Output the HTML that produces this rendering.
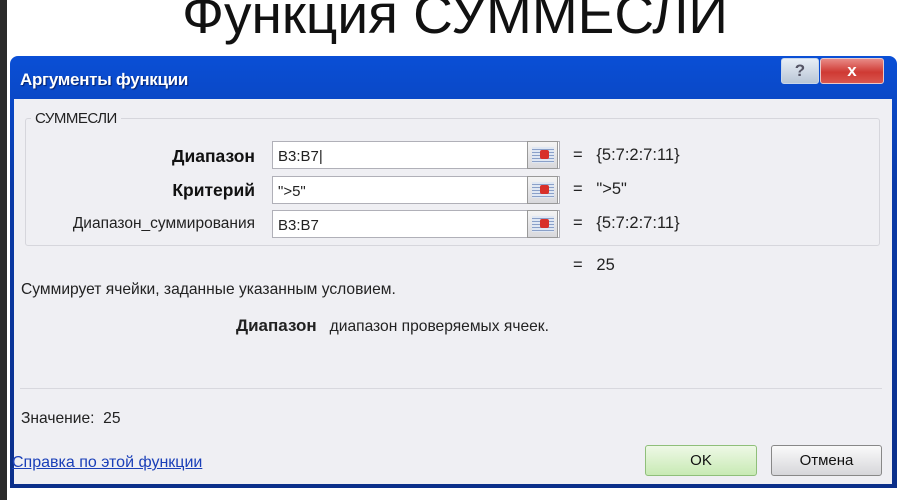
<!DOCTYPE html>
<html><head><meta charset="utf-8"><style>
*{margin:0;padding:0;box-sizing:border-box}
body{width:900px;height:500px;background:#fff;position:relative;overflow:hidden;font-family:"Liberation Sans","DejaVu Sans",sans-serif;color:#111}
.a{position:absolute;white-space:nowrap}
.strip{left:0;top:0;width:7px;height:500px;background:#2a2a2a}
.title{left:0;width:910px;top:-18px;text-align:center;font-size:55px;color:#111}
.dlg{left:10px;top:56px;width:887px;height:432px;background:linear-gradient(#0a4fd6,#0a3aa8 30%,#0b2f8a);border-radius:8px 8px 0 0}
.tb{left:20px;top:70px;color:#fff;font-weight:bold;font-size:17px;text-shadow:1px 1px 1px #03206b;letter-spacing:-0.3px}
.body{left:14px;top:99px;width:878px;height:385px;background:#efeff3}
.grp{left:25px;top:118px;width:855px;height:128px;border:1px solid #d6d6dc;border-radius:3px}
.gl{left:31px;top:110px;background:#efeff3;padding:0 4px;font-size:15px;color:#222;letter-spacing:-0.5px}
.lbl{font-size:15.5px;text-align:right;width:240px;left:15px;color:#222}
.b{font-weight:bold;font-size:17.5px;color:#111}
.inp{left:272px;width:288px;height:28px;border:1px solid #b0b0b8;background:#fff;font-size:15px;padding:6px 5px;color:#222}
.ib{left:527px;width:31px;height:28px;border:1px solid #999;background:linear-gradient(#f4f4f4,#d8d8dc)}
.ib i{position:absolute;left:4px;top:5px;width:22px;height:16px;background:repeating-linear-gradient(#dfe7f3 0 2px,#8aa0c8 2px 3px)}
.ib b{position:absolute;left:12px;top:8px;width:9px;height:9px;background:#d8302a;border-radius:2px}
.eq{left:573px;font-size:16.5px;color:#222}
.txt{font-size:15.6px;color:#222}
.btn{top:445px;height:31px;border:1px solid #888;border-radius:3px;font-size:15px;text-align:center;line-height:29px;color:#111}
</style></head><body>
<div class="a strip"></div>
<div class="a title">Функция СУММЕСЛИ</div>
<div class="a dlg"></div>
<div class="a tb">Аргументы функции</div>
<div class="a" style="left:781px;top:58px;width:38px;height:26px;border:1px solid #c9d6ea;border-radius:3px;background:linear-gradient(#e8eef6,#b9c6d6);color:#556;text-align:center;font-weight:bold;font-size:17px;line-height:24px">?</div>
<div class="a" style="left:820px;top:58px;width:64px;height:26px;border:1px solid #e9c8c8;border-radius:3px;background:linear-gradient(#e88a86,#cf3a33 55%,#d9564f);color:#fff;text-align:center;font-weight:bold;font-size:17px;line-height:24px">x</div>
<div class="a body"></div>
<div class="a grp"></div>
<div class="a gl">СУММЕСЛИ</div>
<div class="a lbl b" style="top:146px">Диапазон</div>
<div class="a lbl b" style="top:180px">Критерий</div>
<div class="a lbl" style="top:215px">Диапазон_суммирования</div>
<div class="a inp" style="top:141px">B3:B7|</div>
<div class="a inp" style="top:176px">"&gt;5"</div>
<div class="a inp" style="top:210px">B3:B7</div>
<div class="a ib" style="top:141px"><i></i><b></b></div>
<div class="a ib" style="top:176px"><i></i><b></b></div>
<div class="a ib" style="top:210px"><i></i><b></b></div>
<div class="a eq" style="top:146px">=&nbsp;&nbsp;&nbsp;{5:7:2:7:11}</div>
<div class="a eq" style="top:180px">=&nbsp;&nbsp;&nbsp;"&gt;5"</div>
<div class="a eq" style="top:214px">=&nbsp;&nbsp;&nbsp;{5:7:2:7:11}</div>
<div class="a eq" style="top:256px">=&nbsp;&nbsp;&nbsp;25</div>
<div class="a txt" style="left:21px;top:281px">Суммирует ячейки, заданные указанным условием.</div>
<div class="a txt" style="left:236px;top:316px"><b style="font-size:17px">Диапазон</b>&nbsp;&nbsp; диапазон проверяемых ячеек.</div>
<div class="a" style="left:20px;top:388px;width:862px;height:1px;background:#d8d8de"></div>
<div class="a txt" style="left:21px;top:410px">Значение:&nbsp;&nbsp;25</div>
<div class="a txt" style="left:12px;top:454px;color:#1a3fb8;text-decoration:underline;font-size:16px">Справка по этой функции</div>
<div class="a btn" style="left:645px;width:112px;background:linear-gradient(#eef8e6,#c8eab4);border-color:#8fbf7a">OK</div>
<div class="a btn" style="left:771px;width:111px;background:linear-gradient(#fafafa,#d6d6da)">Отмена</div>
</body></html>
